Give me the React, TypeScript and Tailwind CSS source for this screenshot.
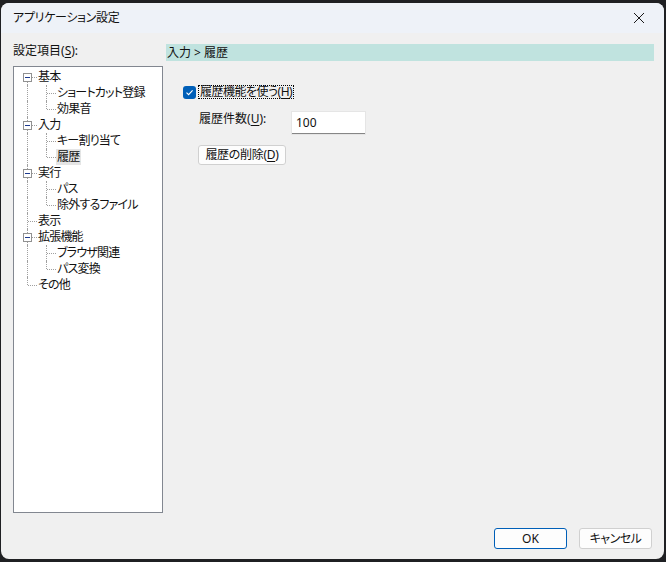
import React from "react";

type Row = {
  level: 0 | 1;
  label: string;
  exp?: boolean;
  first?: boolean;
  last?: boolean;
  lastChild?: boolean;
  selected?: boolean;
};

const rows: Row[] = [
  { level: 0, label: "基本", exp: true, first: true },
  { level: 1, label: "ショートカット登録" },
  { level: 1, label: "効果音", lastChild: true },
  { level: 0, label: "入力", exp: true },
  { level: 1, label: "キー割り当て" },
  { level: 1, label: "履歴", lastChild: true, selected: true },
  { level: 0, label: "実行", exp: true },
  { level: 1, label: "パス" },
  { level: 1, label: "除外するファイル", lastChild: true },
  { level: 0, label: "表示" },
  { level: 0, label: "拡張機能", exp: true },
  { level: 1, label: "ブラウザ関連" },
  { level: 1, label: "パス変換", lastChild: true },
  { level: 0, label: "その他", last: true },
];

const dot = "border-dotted border-[#a0a0a0]";

function Vert({ part }: { part: "full" | "top" | "bottom" }) {
  const pos = part === "full" ? "top-0 bottom-0" : part === "top" ? "top-0 h-2" : "top-2 bottom-0";
  return <span className={`absolute left-[9px] border-l ${dot} ${pos}`} />;
}

function Horiz() {
  return <span className={`absolute left-[10px] right-0 top-2 border-t ${dot}`} />;
}

function TreeRow({ row }: { row: Row }) {
  return (
    <div className="flex h-4 items-center">
      <div className="relative h-4 w-[19px] shrink-0">
        <Vert part={row.level === 1 ? "full" : row.first ? "bottom" : row.last ? "top" : "full"} />
        {row.level === 0 && <Horiz />}
        {row.exp && (
          <span className="absolute left-[5px] top-[4px] flex h-[9px] w-[9px] items-center justify-center border border-[#919191] bg-white">
            <span className="h-px w-[5px] bg-[#1d3a8f]" />
          </span>
        )}
      </div>
      {row.level === 1 && (
        <div className="relative h-4 w-[19px] shrink-0">
          <Vert part={row.lastChild ? "top" : "full"} />
          <Horiz />
        </div>
      )}
      <span
        className={`whitespace-nowrap leading-4 tracking-[-0.8px] ${
          row.selected ? "bg-[#e5e5e5] pl-px pr-[2px]" : "ml-px"
        }`}
      >
        {row.label}
      </span>
    </div>
  );
}

function Key({ k }: { k: string }) {
  return (
    <>
      (<span className="underline underline-offset-2">{k}</span>)
    </>
  );
}

export default function App() {
  return (
    <div
      className="h-[562px] w-[666px] overflow-hidden bg-[#1f2023] pt-[3px] text-[12px] text-[#111] [font-feature-settings:'palt']"
      style={{ fontFamily: '"Noto Sans", "Noto Sans CJK JP", sans-serif' }}
    >
      <div className="ml-px flex h-[556px] w-[663px] flex-col overflow-hidden rounded-lg bg-[#f0f0f0]">
        {/* title bar */}
        <div className="flex h-[30px] shrink-0 items-center justify-between bg-[#eef2f8] pl-[12px] pr-[10px]">
          <span className="text-[12px] tracking-[-0.3px]">アプリケーション設定</span>
          <svg width="30" height="30" viewBox="0 0 30 30" className="text-[#1a1a1a]">
            <path d="M10 10 L20 20 M20 10 L10 20" stroke="currentColor" strokeWidth="1" />
          </svg>
        </div>

        {/* body */}
        <div className="flex flex-1 flex-col">
          <div className="flex flex-1 gap-[3px] pl-[12px] pr-[10px] pt-[11px]">
            {/* left */}
            <div className="flex w-[150px] flex-col">
              <div className="h-[22px] leading-[14px]">
                設定項目<Key k="S" />:
              </div>
              <div className="h-[447px] border border-[#828790] bg-white pl-1 pt-[2px]">
                {rows.map((r, i) => (
                  <TreeRow key={i} row={r} />
                ))}
              </div>
            </div>

            {/* right */}
            <div className="flex flex-1 flex-col">
              <div className="h-[17px] bg-[#c0e3df] pl-px leading-[17px]">入力 &gt; 履歴</div>
              <div className="flex flex-col pl-[17px] pt-[24px]">
                <div className="flex items-center">
                  <span className="flex h-[13px] w-[13px] items-center justify-center rounded-[3px] bg-[#005fb8]">
                    <svg width="9" height="9" viewBox="0 0 9 9">
                      <path d="M1.5 4.6 L3.6 6.6 L7.6 2.4" fill="none" stroke="white" strokeWidth="1.1" />
                    </svg>
                  </span>
                  <span className="ml-[2px] border border-dotted border-black px-px leading-[12px] tracking-[-0.5px]">
                    履歴機能を使う<Key k="H" />
                  </span>
                </div>
                <div className="mt-[13px] flex items-start">
                  <span className="w-[109px] pl-[16px] leading-[14px]">
                    履歴件数<Key k="U" />:
                  </span>
                  <div className="h-[22px] w-[73px] border-b border-[#868686] bg-white pl-[4px] leading-[22px] shadow-[0_0_0_1px_#e5e5e5]">
                    100
                  </div>
                </div>
                <div className="mt-[11px] pl-[15px]">
                  <button className="h-[20px] w-[88px] rounded-[3px] border border-[#d0d0d0] bg-[#fdfdfd] leading-[18px] tracking-[-0.3px]">
                    履歴の削除<Key k="D" />
                  </button>
                </div>
              </div>
            </div>
          </div>

          {/* footer */}
          <div className="flex justify-end gap-[12px] pb-[10px] pr-[12px] pt-[13px]">
            <button className="h-[21px] w-[73px] rounded-[3px] border border-[#005fb8] bg-[#fdfdfd] leading-[19px]">
              OK
            </button>
            <button className="h-[21px] w-[73px] rounded-[3px] border border-[#d0d0d0] bg-[#fdfdfd] leading-[19px] tracking-[-0.5px]">
              キャンセル
            </button>
          </div>
        </div>
      </div>
    </div>
  );
}
